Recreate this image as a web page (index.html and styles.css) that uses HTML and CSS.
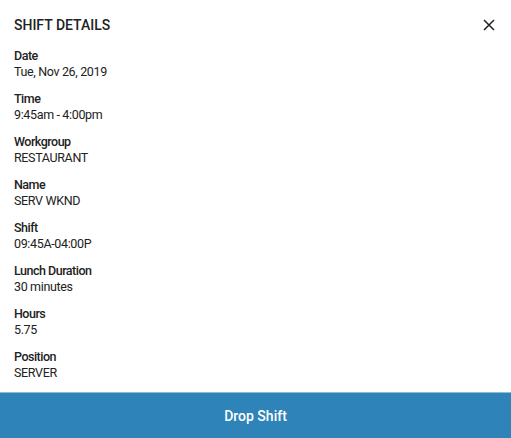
FILE: index.html
```html
<!DOCTYPE html>
<html>
<head>
<meta charset="utf-8">
<title>Shift Details</title>
<link rel="stylesheet" href="styles.css">
</head>
<body>
<div id="sheet">
	<div class="header">
		<div class="title">SHIFT DETAILS</div>
		<button class="close" aria-label="Close">
			<svg width="12" height="12" viewBox="0 0 12 12"><path d="M1 1L11 11M11 1L1 11" stroke="#222" stroke-width="1.5" fill="none"/></svg>
		</button>
	</div>
	<div class="details">
		<div class="item"><div class="label">Date</div><div class="value">Tue, Nov 26, 2019</div></div>
		<div class="item"><div class="label">Time</div><div class="value">9:45am - 4:00pm</div></div>
		<div class="item"><div class="label">Workgroup</div><div class="value">RESTAURANT</div></div>
		<div class="item"><div class="label">Name</div><div class="value">SERV WKND</div></div>
		<div class="item"><div class="label">Shift</div><div class="value">09:45A-04:00P</div></div>
		<div class="item"><div class="label">Lunch Duration</div><div class="value">30 minutes</div></div>
		<div class="item"><div class="label">Hours</div><div class="value">5.75</div></div>
		<div class="item"><div class="label">Position</div><div class="value">SERVER</div></div>
	</div>
	<button class="drop">Drop Shift</button>
</div>
</body>
</html>
```
FILE: styles.css
```css
html, body {
	margin: 0px;
	padding: 0px;
	background: #fff;
}
#sheet {
	font-family: Roboto, "Liberation Sans", sans-serif;
	color: #222;
	height: 438px;
	display: flex;
	flex-direction: column;
}
.header {
	display: flex;
	justify-content: space-between;
	align-items: center;
	padding: 17px 16px 0px 14px;
}
.title {
	font-size: 14px;
	font-weight: 500;
	line-height: 16px;
}
.close {
	border: none;
	background: none;
	padding: 0px;
	width: 12px;
	height: 12px;
	cursor: pointer;
}
.details {
	flex: 1;
	padding: 15px 14px 0px;
}
.item {
	margin-bottom: 11px;
	font-size: 12.5px;
	line-height: 16px;
}
.label {
	font-weight: 500;
	letter-spacing: -0.5px;
}
.value {
	letter-spacing: -0.35px;
}
.drop {
	height: 46px;
	border: none;
	border-top: 1px solid #8fbcd9;
	background: #2e83b8;
	color: #fff;
	font-family: Roboto, "Liberation Sans", sans-serif;
	font-size: 14px;
	font-weight: 500;
	cursor: pointer;
}
```
